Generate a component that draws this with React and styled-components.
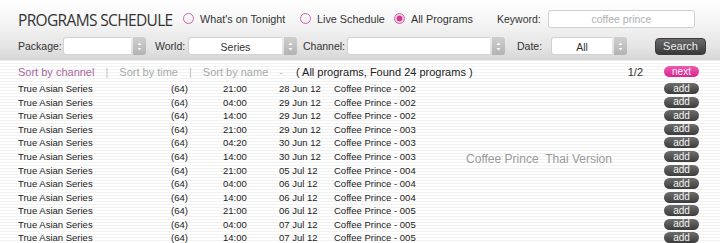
import React from 'react'
import styled, { createGlobalStyle } from 'styled-components'

const GlobalStyle = createGlobalStyle`
  body {
    margin: 0;
    background: #fff;
    font-family: "Liberation Sans", Arial, sans-serif;
  }
`

const programs = [
    ['21:00', '28 Jun 12', '002'],
    ['04:00', '29 Jun 12', '002'],
    ['14:00', '29 Jun 12', '002'],
    ['21:00', '29 Jun 12', '003'],
    ['04:20', '30 Jun 12', '003'],
    ['14:00', '30 Jun 12', '003'],
    ['21:00', '05 Jul 12', '004'],
    ['04:00', '06 Jul 12', '004'],
    ['14:00', '06 Jul 12', '004'],
    ['21:00', '06 Jul 12', '005'],
    ['04:00', '07 Jul 12', '005'],
    ['14:00', '07 Jul 12', '005'],
]

function Spinner() {
    return (
        <SpinBtn>
            <svg width="5" height="9" viewBox="0 0 5 9">
                <path d="M2.5 0.5 L4.5 3 L0.5 3 Z" fill="#fff" />
                <path d="M2.5 8.5 L4.5 6 L0.5 6 Z" fill="#fff" />
            </svg>
        </SpinBtn>
    )
}

function Select({ width, value }) {
    return (
        <SelectBox $w={width}>
            <SelectField>{value}</SelectField>
            <Spinner />
        </SelectBox>
    )
}

function App() {
    return (
        <Page>
            <GlobalStyle />
            <Header>
                <TopRow>
                    <Title>PROGRAMS SCHEDULE</Title>
                    <RadioItem $w={117}><Radio /><span>What's on Tonight</span></RadioItem>
                    <RadioItem $w={94}><Radio /><span>Live Schedule</span></RadioItem>
                    <RadioItem $w={103}><Radio $checked /><span>All Programs</span></RadioItem>
                    <Label $w={51}>Keyword:</Label>
                    <Keyword placeholder="coffee prince" />
                </TopRow>
                <FilterRow>
                    <Label $w={45}>Package:</Label>
                    <Select width={83} value="" />
                    <Spacer $w={9} />
                    <Label $w={33}>World:</Label>
                    <Select width={109} value="Series" />
                    <Spacer $w={6} />
                    <Label $w={44}>Channel:</Label>
                    <Select width={158} value="" />
                    <Spacer $w={12} />
                    <Label $w={34}>Date:</Label>
                    <Select width={76} value="All" />
                    <Spacer $w={28} />
                    <SearchButton>Search</SearchButton>
                </FilterRow>
            </Header>
            <Content>
                <SortRow>
                    <SortLink $active>Sort by channel</SortLink>
                    <Sep>|</Sep>
                    <SortLink>Sort by time</SortLink>
                    <Sep>|</Sep>
                    <SortLink>Sort by name</SortLink>
                    <Sep>-</Sep>
                    <Found>( All programs, Found 24 programs )</Found>
                    <PageNo>1/2</PageNo>
                    <NextWrap><Pill $pink>next</Pill></NextWrap>
                </SortRow>
                <Table>
                    {programs.map((p, i) => (
                        <Row key={i}>
                            <Cell>True Asian Series</Cell>
                            <Cell $right>(64)</Cell>
                            <Cell $pad={35}>{p[0]}</Cell>
                            <Cell>{p[1]}</Cell>
                            <Cell>Coffee Prince - {p[2]}</Cell>
                            <AddCell><Pill>add</Pill></AddCell>
                        </Row>
                    ))}
                    <Description>Coffee Prince{'\u00a0\u00a0'}Thai Version</Description>
                </Table>
            </Content>
        </Page>
    )
}

export default App


const Page = styled.div`
  width: 720px;
  height: 243px;
  overflow: hidden;
`

const Header = styled.div`
  height: 60px;
  box-sizing: border-box;
  padding: 9px 0 0 18px;
  background: linear-gradient(#ffffff 0%, #f6f6f6 35%, #e4e4e4 80%, #d6d6d6 100%);
  box-shadow: 0 1px 1px rgba(0, 0, 0, 0.08);
  color: #333;
`

const TopRow = styled.div`
  display: flex;
  align-items: center;
  height: 19px;
`

const Title = styled.div`
  width: 165px;
  font-family: "Open Sans", sans-serif;
  font-size: 15.5px;
  font-weight: 500;
  letter-spacing: -0.65px;
  color: #333;
  white-space: nowrap;
  padding-top: 3px;
`

const RadioItem = styled.label`
  width: ${p => p.$w}px;
  display: flex;
  align-items: center;
  gap: 6px;
  font-size: 10.8px;
  color: #333;
  white-space: nowrap;
`

const Radio = styled.span`
  width: 9px;
  height: 9px;
  border-radius: 50%;
  border: 1px solid #c86aa8;
  background: ${p => p.$checked
        ? 'radial-gradient(circle, #d2388f 0 2.6px, #f3c9e2 3.2px)'
        : 'linear-gradient(#fff, #f1e8ee)'};
  flex: none;
`

const Label = styled.span`
  width: ${p => p.$w}px;
  flex: none;
  font-size: 10.5px;
  color: #333;
  white-space: nowrap;
`

const Keyword = styled.input`
  width: 147px;
  height: 18px;
  box-sizing: border-box;
  border: 1px solid #cfcfcf;
  border-radius: 3px;
  background: #fff;
  text-align: center;
  font-family: "Liberation Sans", Arial, sans-serif;
  font-size: 10.5px;
  outline: none;
  &::placeholder { color: #b0b0b0; }
`

const FilterRow = styled.div`
  display: flex;
  align-items: center;
  height: 18px;
  margin-top: 9px;
`

const Spacer = styled.span`
  width: ${p => p.$w}px;
  flex: none;
`

const SelectBox = styled.div`
  width: ${p => p.$w}px;
  height: 18px;
  display: flex;
  gap: 2px;
  flex: none;
`

const SelectField = styled.div`
  flex: 1;
  background: #fff;
  border: 1px solid #d2d2d2;
  border-right: none;
  border-radius: 3px 0 0 3px;
  font-size: 10.5px;
  color: #333;
  display: flex;
  align-items: center;
  justify-content: center;
  padding-top: 2px;
  box-sizing: border-box;
`

const SpinBtn = styled.div`
  width: 13px;
  background: linear-gradient(#cfcfcf, #b3b3b3);
  border-radius: 0 3px 3px 0;
  display: flex;
  align-items: center;
  justify-content: center;
`

const SearchButton = styled.button`
  width: 51px;
  height: 17px;
  padding: 0;
  border: 1px solid #3c3c3c;
  border-radius: 4px;
  background: linear-gradient(#6a6a6a, #3a3a3a);
  color: #eee;
  font-family: "Liberation Sans", Arial, sans-serif;
  font-size: 11px;
`

const Content = styled.div`
  background: repeating-linear-gradient(#ffffff 0 2px, #f2f2f2 2px 3px);
  height: 183px;
  margin-top: 1px;
`

const SortRow = styled.div`
  display: flex;
  align-items: center;
  height: 21px;
  padding-left: 18px;
  font-size: 11px;
`

const SortLink = styled.span`
  color: ${p => p.$active ? '#a8679c' : '#a9a9a9'};
  white-space: nowrap;
`

const Sep = styled.span`
  color: #bdbdbd;
  margin: 0 11px;
`

const Found = styled.span`
  color: #222;
  white-space: nowrap;
  margin-left: 2px;
`

const PageNo = styled.span`
  margin-left: auto;
  margin-right: 21px;
  color: #333;
`

const NextWrap = styled.span`
  display: flex;
  margin-right: 21px;
`

const Pill = styled.span`
  width: 35px;
  height: 11px;
  flex: none;
  display: inline-flex;
  align-items: center;
  justify-content: center;
  border-radius: 6px;
  font-size: 10px;
  line-height: 1;
  color: #f4f4f4;
  background: ${p => p.$pink
        ? 'linear-gradient(#f05ab0, #d8258e)'
        : 'linear-gradient(#6e6e6e, #3c3c3c)'};
`

const Table = styled.div`
  display: grid;
  grid-template-columns: 130px 40px 91px 55px 86px 244px 35px;
  grid-auto-rows: 13.55px;
  padding-left: 18px;
  font-size: 9.5px;
  color: #222;
`

const Row = styled.div`
  display: contents;
`

const Cell = styled.div`
  display: flex;
  align-items: center;
  justify-content: ${p => p.$right ? 'flex-end' : 'flex-start'};
  padding-left: ${p => p.$pad || 0}px;
  white-space: nowrap;
`

const AddCell = styled.div`
  grid-column: 7;
  display: flex;
  align-items: center;
`

const Description = styled.div`
  grid-column: 6;
  grid-row: 1 / span 12;
  align-self: center;
  justify-self: center;
  margin: 0 6px 8px 0;
  font-size: 12px;
  color: #9a9a9a;
  white-space: nowrap;
`
